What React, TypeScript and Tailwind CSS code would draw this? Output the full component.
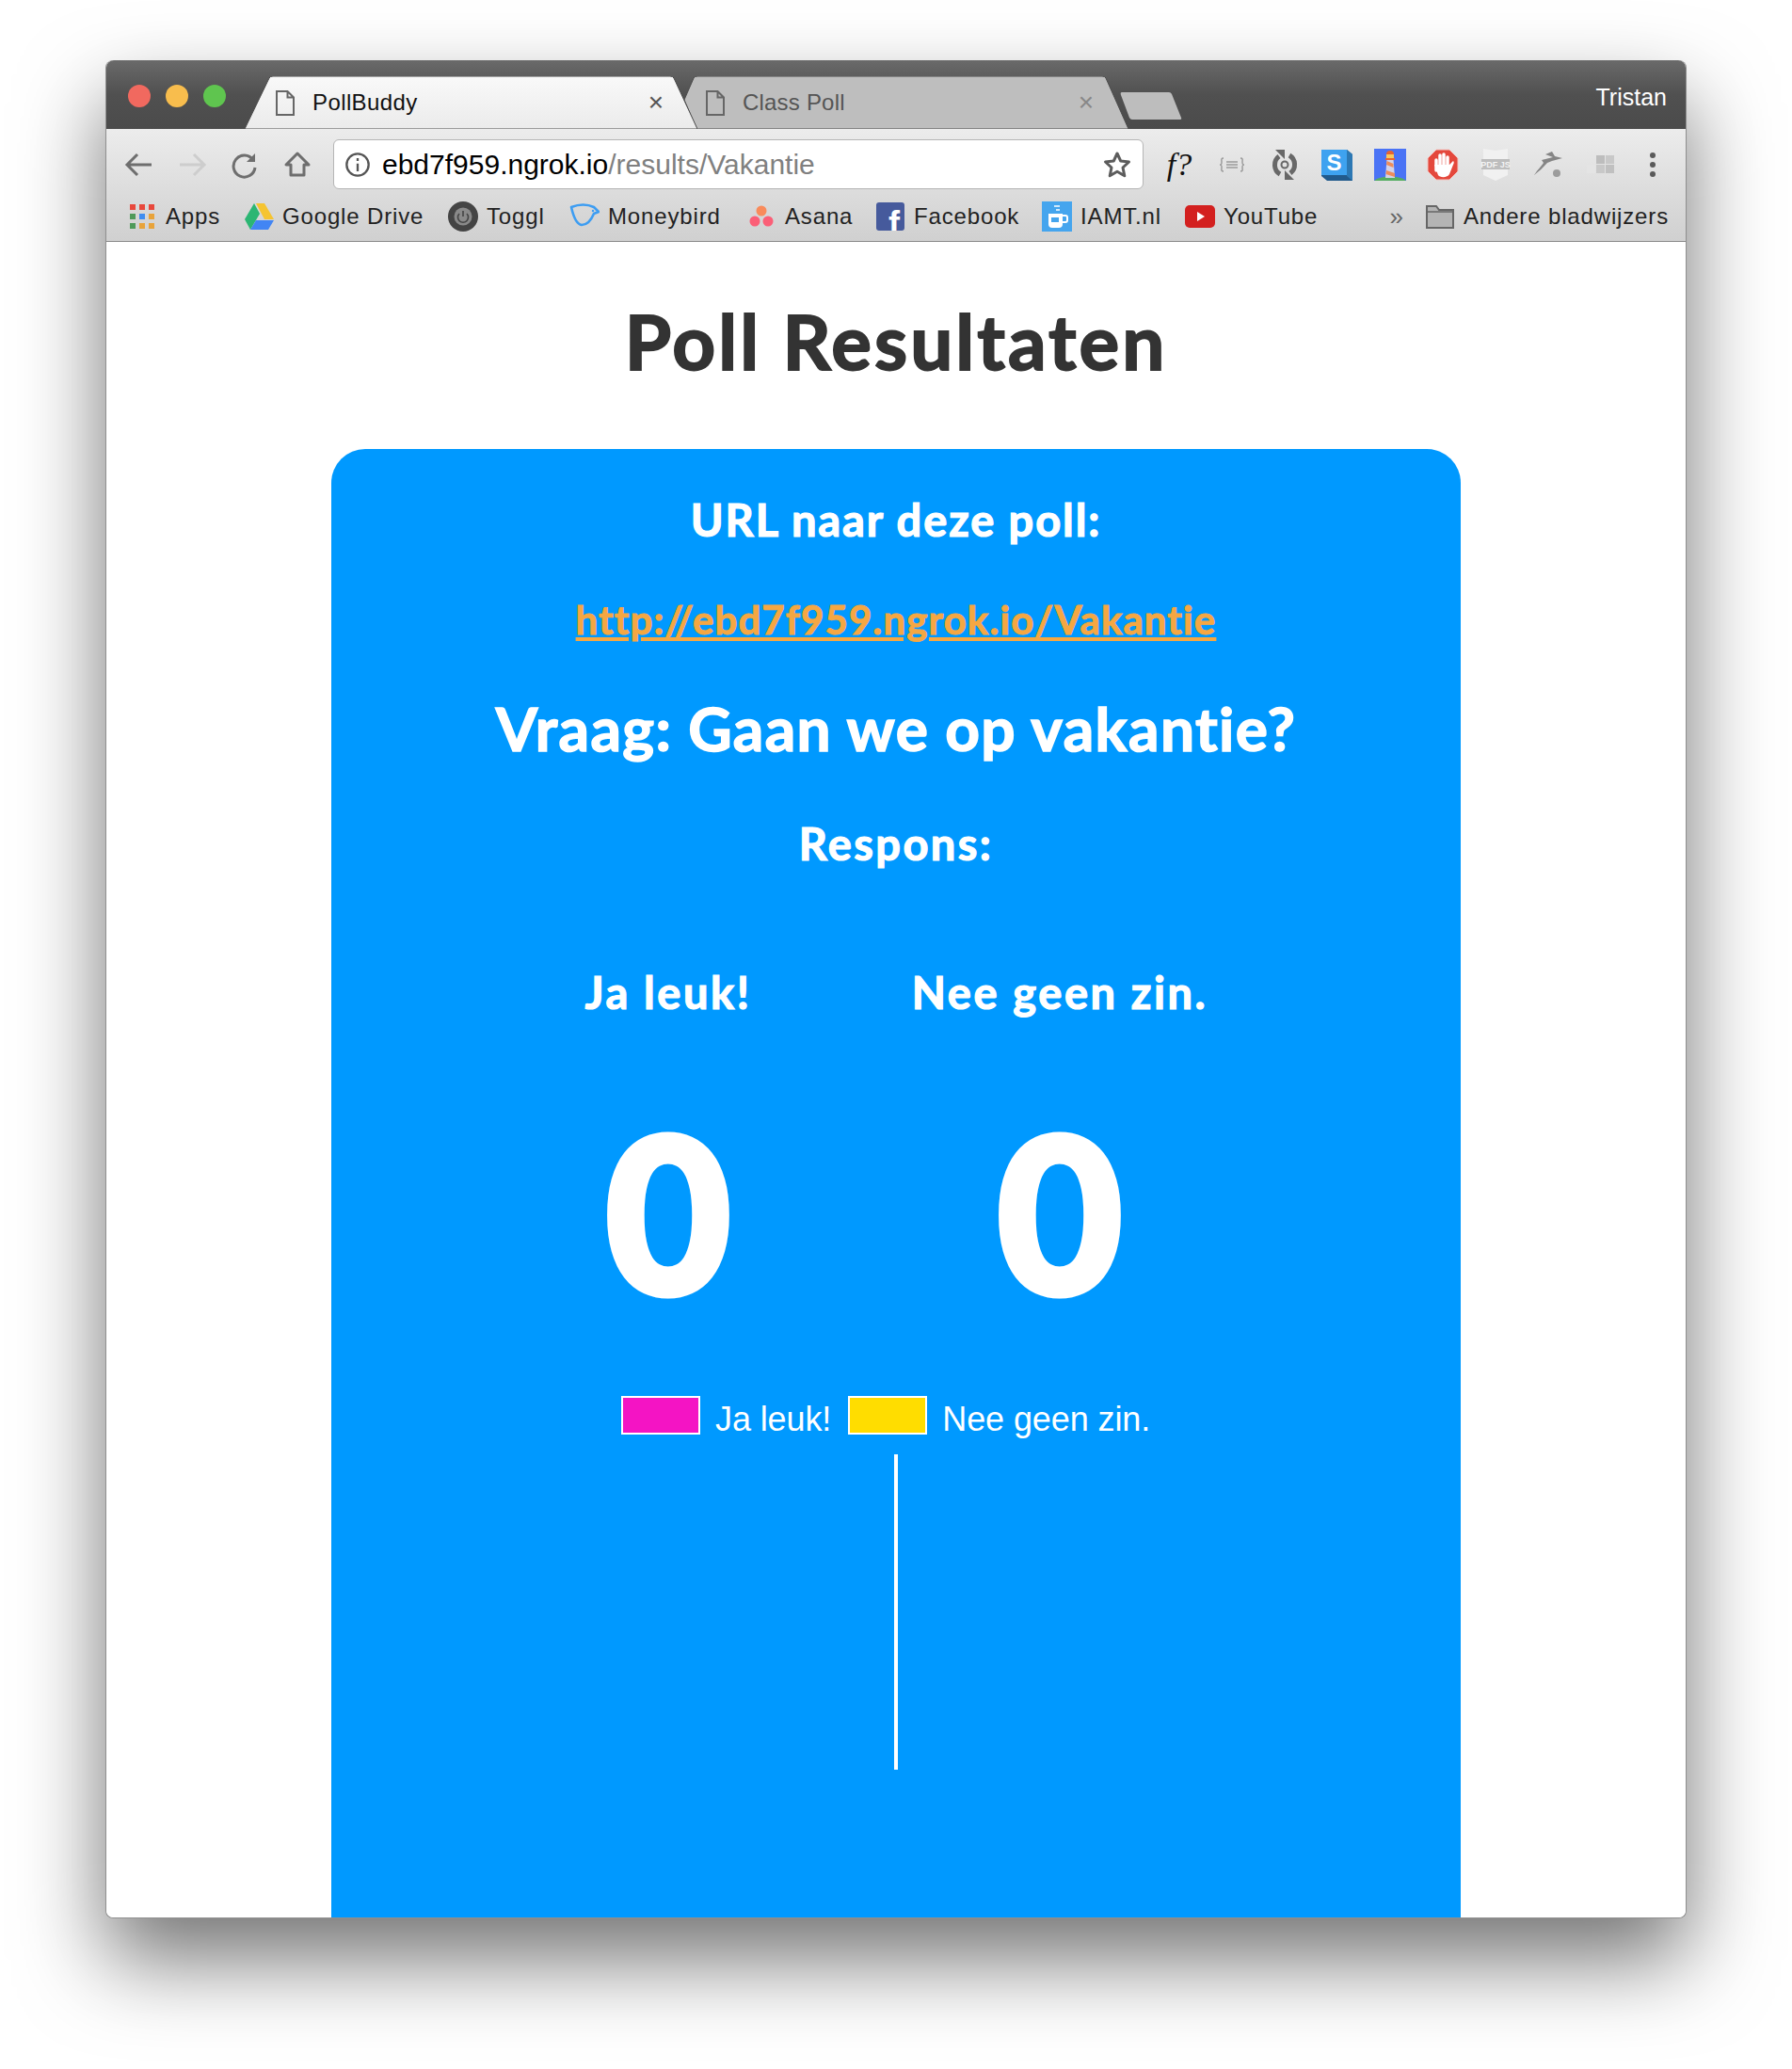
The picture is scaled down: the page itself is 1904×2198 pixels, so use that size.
import type { ReactNode } from 'react'

const BOOKMARKS: { label: string; width: string; icon: ReactNode }[] = [
  {
    label: 'Apps',
    width: 'w-[124px]',
    icon: (
      <svg width="28" height="28" viewBox="0 0 28 28">
        {[
          ['#e8483c', '#e8483c', '#e8483c'],
          ['#4f9a5a', '#3f8df0', '#e8a33a'],
          ['#4f9a5a', '#e8a33a', '#e8a33a'],
        ].map((row, y) =>
          row.map((fill, x) => <rect key={`${x}-${y}`} x={1 + x * 10} y={1 + y * 10} width="6" height="6" fill={fill} />),
        )}
      </svg>
    ),
  },
  {
    label: 'Google Drive',
    width: 'w-[217px]',
    icon: (
      <svg width="32" height="32" viewBox="0 0 32 32">
        <path d="M13 2h9l10 17h-10z" fill="#f5c431" />
        <path d="M11 2L1 19l6 11 10-17z" fill="#2bb673" />
        <path d="M13 20h19l-6 10H7z" fill="#4285f4" />
      </svg>
    ),
  },
  {
    label: 'Toggl',
    width: 'w-[129px]',
    icon: (
      <svg width="32" height="32" viewBox="0 0 32 32">
        <circle cx="16" cy="16" r="16" fill="#444" />
        <circle cx="16" cy="16" r="9.5" fill="#8a8a8a" />
        <path d="M12 13a5.500 5.500 0 1 0 8 0M16 10v6" fill="none" stroke="#444" strokeWidth="1.6" />
      </svg>
    ),
  },
  {
    label: 'Moneybird',
    width: 'w-[188px]',
    icon: (
      <svg width="32" height="32" viewBox="0 0 32 32">
        <path d="M2 6Q15 1 26 6L31 11 26 13Q21 25 13 25 6 24 2 6z" fill="none" stroke="#3d9df2" strokeWidth="2.600" strokeLinejoin="round" />
        <circle cx="25" cy="10" r="1.200" fill="#3d9df2" />
      </svg>
    ),
  },
  {
    label: 'Asana',
    width: 'w-[137px]',
    icon: (
      <svg width="28" height="28" viewBox="0 0 28 28">
        <circle cx="14" cy="8" r="5.5" fill="#f98b5b" />
        <circle cx="7" cy="19" r="5.5" fill="#fb5f77" />
        <circle cx="21" cy="19" r="5.5" fill="#fb5f77" />
      </svg>
    ),
  },
  {
    label: 'Facebook',
    width: 'w-[177px]',
    icon: (
      <svg width="30" height="30" viewBox="0 0 30 30">
        <rect width="30" height="30" rx="3" fill="#465a9c" />
        <text x="13" y="35" fontSize="36" fontWeight="700" fill="#fff" fontFamily="Liberation Sans, sans-serif">f</text>
      </svg>
    ),
  },
  {
    label: 'IAMT.nl',
    width: 'w-[152px]',
    icon: (
      <svg width="32" height="32" viewBox="0 0 32 32">
        <rect width="32" height="32" fill="#45a5ee" />
        <path d="M13 4h6v2h-6zM15 8h4v2h-4z" fill="#cfe8fb" />
        <path d="M7 13h15v11a4 4 0 0 1-4 4h-7a4 4 0 0 1-4-4z" fill="#fff" />
        <path d="M22 15h3a2 2 0 0 1 2 2v3a2 2 0 0 1-2 2h-3" fill="none" stroke="#fff" strokeWidth="2" />
        <rect x="10" y="17" width="8" height="5" fill="#45a5ee" />
      </svg>
    ),
  },
  {
    label: 'YouTube',
    width: '',
    icon: (
      <svg width="32" height="32" viewBox="0 0 32 32">
        <rect x="0" y="4" width="32" height="24" rx="5" fill="#d3201f" />
        <path d="M13 11l8 5-8 5z" fill="#fff" />
      </svg>
    ),
  },
]

function NavIcons() {
  return (
    <div className="flex items-center gap-[22px] ml-[18px] mr-[21px]">
      <svg width="34" height="34" viewBox="0 0 34 34" fill="none" stroke="#6e6e6e" strokeWidth="3">
        <path d="M30 17H5M15 6L4 17l11 11" />
      </svg>
      <svg width="34" height="34" viewBox="0 0 34 34" fill="none" stroke="#cdcdcd" strokeWidth="3">
        <path d="M4 17h25M19 6l11 11-11 11" />
      </svg>
      <svg width="34" height="34" viewBox="0 0 34 34" fill="none" stroke="#6e6e6e" strokeWidth="3">
        <path d="M26 12a11.500 11.500 0 1 0 2 8" />
        <path d="M28 5v9h-9z" fill="#6e6e6e" stroke="none" />
      </svg>
      <svg width="34" height="34" viewBox="0 0 34 34" fill="none" stroke="#6e6e6e" strokeWidth="3">
        <path d="M17 5L5 17h5v11h14V17h5z" strokeLinejoin="round" />
      </svg>
    </div>
  )
}

function ExtensionIcons() {
  return (
    <div className="flex items-center gap-[22px] ml-[21px]">
      <span className="w-[34px] text-center font-['Liberation_Serif',serif] italic text-[34px] leading-[34px] text-[#111]">f?</span>
      <svg width="34" height="34" viewBox="0 0 34 34" fill="none" stroke="#9c9c9c" strokeWidth="1.500">
        <path d="M8 10c-3 0-2 2-2 4s0 3-2 3c2 0 2 1 2 3s-1 4 2 4M26 10c3 0 2 2 2 4s0 3 2 3c-2 0-2 1-2 3s1 4-2 4" />
        <path d="M11 14h12M11 17h12M11 20h12" />
      </svg>
      <svg width="34" height="34" viewBox="0 0 34 34" fill="none" stroke="#686868" strokeWidth="5">
        <path d="M11 8a11.500 11.500 0 0 0 1 19M23 26a11.500 11.500 0 0 0-1-19" />
        <path d="M7 1h10v10zM27 33H17V23z" fill="#686868" stroke="none" />
        <circle cx="17" cy="17" r="3.500" strokeWidth="2" />
      </svg>
      <svg width="34" height="34" viewBox="0 0 34 34">
        <path d="M0 1h27l6 5v28H6l-6-5z" fill="#215a8c" />
        <path d="M27 1l6 5v28l-6-5z" fill="#2c78b4" />
        <rect x="0" y="1" width="27" height="27" fill="#3ea2f0" />
        <text x="13.5" y="23" textAnchor="middle" fontSize="24" fontWeight="700" fill="#fff" fontFamily="Liberation Sans, sans-serif">S</text>
      </svg>
      <svg width="34" height="34" viewBox="0 0 34 34">
        <rect width="34" height="34" fill="#4a73f5" />
        <path d="M0 34c6-6 28-6 34 0z" fill="#55ad62" />
        <path d="M13.500 11h7l1.500 20H12z" fill="#d3d3ea" />
        <path d="M13.500 13l7 3v4l-7.500-3zM13 23l9 3v4l-9.500-3z" fill="#ee8d5a" />
        <rect x="13" y="6" width="8" height="5" fill="#f9c95b" />
        <path d="M13 6a4 4 0 0 1 8 0zM12 10h10v2H12z" fill="#e8632e" />
      </svg>
      <svg width="34" height="34" viewBox="0 0 34 34">
        <path d="M10 1h14l9 9v14l-9 9H10l-9-9V10z" fill="#e4483c" stroke="#f2c6c2" />
        <path d="M10 12v11M14 7v12M18 6v13M22 9v12" stroke="#fff" strokeWidth="3.500" strokeLinecap="round" />
        <path d="M8 17h16l4-4c1 1 1 2 0 4l-4 10c-2 4-10 4-12 1z" fill="#fff" />
      </svg>
      <svg width="34" height="38" viewBox="0 0 34 38">
        <path d="M4 2l13 2 13-2v28l-13 6-13-6z" fill="#f1f1f1" />
        <rect x="2" y="13" width="30" height="11" fill="#bdbdbd" />
        <text x="17" y="22" textAnchor="middle" fontSize="9" fill="#f4f4f4" fontFamily="Liberation Sans, sans-serif" fontWeight="700">PDF JS</text>
      </svg>
      <svg width="34" height="34" viewBox="0 0 34 34">
        <path d="M2 28C6 22 10 18 12 15L10 12 22 9 14 6 21 3 24 8 32 10 21 13 16 15Q10 22 2 28z" fill="#858585" />
        <circle cx="26" cy="26" r="4" fill="#9c9c9c" />
      </svg>
      <svg width="34" height="34" viewBox="0 0 34 34">
        <rect x="2" y="17" width="9" height="9" fill="#e4e4e4" />
        <rect x="12" y="7" width="9" height="9" fill="#bdbdbd" />
        <rect x="22" y="7" width="9" height="9" fill="#c8c8c8" />
        <rect x="12" y="17" width="9" height="9" fill="#c8c8c8" />
        <rect x="22" y="17" width="9" height="9" fill="#c0c0c0" />
      </svg>
      <svg width="8" height="28" viewBox="0 0 8 28" className="ml-[-1px] translate-x-[13px]">
        <circle cx="4" cy="4" r="3" fill="#5a5a5a" />
        <circle cx="4" cy="14" r="3" fill="#5a5a5a" />
        <circle cx="4" cy="24" r="3" fill="#5a5a5a" />
      </svg>
    </div>
  )
}

function FileIcon() {
  return (
    <svg width="20" height="27" viewBox="0 0 20 27" fill="none" stroke="#666" strokeWidth="2">
      <path d="M1 1h11.500L19 7.500V26H1zM12.500 1v6.500H19" />
    </svg>
  )
}

function TabStrip() {
  return (
    <div className="relative h-[73px] flex-none bg-gradient-to-b from-[#6a6a6a] via-[#505050] to-[#4b4b4b] rounded-t-[8px]">
      <div className="absolute left-[23px] top-[26px] flex gap-[16px]">
        <span className="size-[24px] rounded-full bg-[#f1695f]" />
        <span className="size-[24px] rounded-full bg-[#f8bd4d]" />
        <span className="size-[24px] rounded-full bg-[#5fc54f]" />
      </div>
      <div className="absolute left-[614px] top-[17px] w-[472px] h-[56px]">
        <svg width="472" height="56" viewBox="0 0 472 56" className="absolute inset-0">
          <path d="M0 25L10 2Q11 0 14 0H444Q447 0 448 2L472 56H13z" fill="#bebebe" stroke="#4a4a4a" />
        </svg>
        <div className="relative flex items-center h-[56px]">
          <span className="absolute left-[23px] top-[15px]"><FileIcon /></span>
          <span className="ml-[62px] font-['Liberation_Sans',sans-serif] text-[24px] tracking-[0.2px] text-[#555]">Class Poll</span>
          <span className="ml-auto mr-[37px] text-[28px] text-[#888] font-['Liberation_Sans',sans-serif]">×</span>
        </div>
      </div>
      <div className="absolute left-[147px] top-[17px] w-[481px] h-[56px]">
        <svg width="481" height="56" viewBox="0 0 481 56" className="absolute inset-0">
          <path d="M0 56L26 2Q27 0 30 0H452Q455 0 456 2L481 56z" fill="url(#activeTab)" stroke="#4a4a4a" />
          <defs>
            <linearGradient id="activeTab" x1="0" y1="0" x2="0" y2="1">
              <stop offset="0" stopColor="#f9f9f9" />
              <stop offset="1" stopColor="#ebebeb" />
            </linearGradient>
          </defs>
        </svg>
        <div className="relative flex items-center h-[56px] pr-[36px]">
          <span className="absolute left-[33px] top-[15px]"><FileIcon /></span>
          <span className="ml-[72px] font-['Liberation_Sans',sans-serif] text-[24px] tracking-[0.4px] text-[#111]">PollBuddy</span>
          <span className="ml-auto text-[28px] text-[#555] font-['Liberation_Sans',sans-serif]">×</span>
        </div>
      </div>
      <svg width="66" height="30" viewBox="0 0 66 30" className="absolute left-[1077px] top-[34px]">
        <path d="M2 0H52Q54 0 55 2L65 27Q66 29 63 29H13Q11 29 10 27L1 3Q0 0 2 0z" fill="#bdbdbd" />
      </svg>
      <span className="absolute right-[20px] top-[24px] font-['Liberation_Sans',sans-serif] text-[25px] leading-[30px] text-white">Tristan</span>
    </div>
  )
}

function Toolbar() {
  return (
    <div className="flex-none h-[120px] bg-gradient-to-b from-[#ececec] to-[#d0d0d0] border-b border-[#8c8c8c]">
      <div className="flex items-center h-[75px]">
        <NavIcons />
        <div className="flex items-center w-[861px] h-[53px] bg-white border border-[#b5b5b5] rounded-[6px] pl-[11px] pr-[12px]">
          <svg width="28" height="28" viewBox="0 0 24 24" fill="none" stroke="#555" strokeWidth="2">
            <circle cx="12" cy="12" r="10" />
            <path d="M12 11v7M12 6v2.500" />
          </svg>
          <span className="ml-[12px] font-['Liberation_Sans',sans-serif] text-[30px] text-black">
            ebd7f959.ngrok.io<span className="text-[#808080]">/results/Vakantie</span>
          </span>
          <svg width="30" height="30" viewBox="0 0 30 30" fill="none" stroke="#5c5c5c" strokeWidth="3" className="ml-auto">
            <path d="M15 3l3.700 8 8.800 1-6.500 6 1.800 8.700L15 22.300 7.200 26.700 9 18l-6.500-6 8.800-1z" strokeLinejoin="round" />
          </svg>
        </div>
        <ExtensionIcons />
      </div>
      <div className="flex items-center h-[36px] pl-[22px] pr-[18px] font-['Liberation_Sans',sans-serif] text-[24px] tracking-[0.85px] text-[#222]">
        {BOOKMARKS.map(b => (
          <div key={b.label} className={`flex items-center flex-none ${b.width}`}>
            <span className="flex items-center justify-center w-[32px] h-[32px] mr-[9px]">{b.icon}</span>
            {b.label}
          </div>
        ))}
        <span className="ml-auto text-[26px] text-[#666] mr-[22px]">»</span>
        <svg width="32" height="28" viewBox="0 0 32 28" className="mr-[9px]">
          <path d="M2 3h10l3 4h15v19H2z" fill="#b4b4b4" stroke="#666" strokeWidth="2" />
          <path d="M2 9h28" stroke="#666" strokeWidth="1.500" />
        </svg>
        Andere bladwijzers
      </div>
    </div>
  )
}

function ResponseColumn({ label }: { label: string }) {
  return (
    <div className="flex flex-col items-center w-[416px]">
      <h3 className="text-[47px] leading-[60px] tracking-[2.6px] font-bold [-webkit-text-stroke:1.2px_currentColor] text-white">{label}</h3>
      <div className="mt-[57px] mb-[5px] font-bold text-[224px] leading-[290px] [-webkit-text-stroke:11px_currentColor] text-white">0</div>
    </div>
  )
}

function LegendItem({ color, label }: { color: string; label: string }) {
  return (
    <div className="flex items-center">
      <span className={`w-[84px] h-[41px] border-2 border-white ${color}`} />
      <span className="ml-[16px] mr-[18px] font-['Liberation_Sans',sans-serif] text-[36px] leading-[40px] tracking-[-0.1px] text-white mt-[9px]">{label}</span>
    </div>
  )
}

export default function App() {
  return (
    <div className="w-[1904px] h-[2198px] bg-white pt-[64px] px-[112px] overflow-hidden font-['Lato',sans-serif] [font-variant-ligatures:none]">
      <div className="flex flex-col h-[1974px] rounded-[8px] bg-white border-x border-b border-[#8f8f8f] shadow-[0_44px_90px_rgba(0,0,0,0.55)]">
        <TabStrip />
        <Toolbar />
        <main className="flex-1 flex flex-col items-center min-h-0 bg-white rounded-b-[8px]">
          <h1 className="mt-[60px] text-[80px] leading-[90px] tracking-[3px] font-bold [-webkit-text-stroke:1.8px_currentColor] text-[#333]">Poll Resultaten</h1>
          <section className="flex-1 flex flex-col items-center w-[1200px] mt-[70px] pt-[46px] bg-[#0099ff] rounded-t-[36px] text-white">
            <h3 className="text-[47px] leading-[58px] tracking-[1.9px] font-bold [-webkit-text-stroke:1.2px_currentColor]">URL naar deze poll:</h3>
            <a className="mt-[48px] text-[42px] leading-[58px] tracking-[1.1px] font-bold [-webkit-text-stroke:1px_currentColor] text-[#f5a742] underline">http://ebd7f959.ngrok.io/Vakantie</a>
            <h2 className="mt-[42px] text-[64px] leading-[90px] tracking-[1.35px] font-bold [-webkit-text-stroke:1.5px_currentColor]">Vraag: Gaan we op vakantie?</h2>
            <h3 className="mt-[47px] text-[47px] leading-[60px] tracking-[2.4px] font-bold [-webkit-text-stroke:1.2px_currentColor]">Respons:</h3>
            <div className="flex self-start ml-[150px] mt-[98px]">
              <ResponseColumn label="Ja leuk!" />
              <ResponseColumn label="Nee geen zin." />
            </div>
            <div className="flex self-start ml-[308px] mt-[43px]">
              <LegendItem color="bg-[#f414c4]" label="Ja leuk!" />
              <LegendItem color="bg-[#ffdd00]" label="Nee geen zin." />
            </div>
            <div className="w-[4px] h-[335px] mt-[17px] bg-white" />
          </section>
        </main>
      </div>
    </div>
  )
}
